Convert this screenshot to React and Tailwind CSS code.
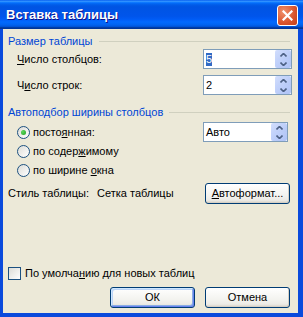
import React from "react";

function Chevron({ up }) {
  return (
    <svg width="7" height="4" viewBox="0 0 7 4">
      <path
        d={up ? "M0.5 3.5 L3.5 0.5 L6.5 3.5" : "M0.5 0.5 L3.5 3.5 L6.5 0.5"}
        stroke="#4D6185"
        strokeWidth="1.6"
        fill="none"
      />
    </svg>
  );
}

function Spinner({ value, selected, width }) {
  return (
    <div className={`flex h-[20px] ${width} border border-[#7F9DB9] bg-white`}>
      <div className="flex flex-1 items-center pl-[2px]">
        {selected ? (
          <span className="bg-[#316AC5] text-white">{value}</span>
        ) : (
          <span>{value}</span>
        )}
      </div>
      <div className="flex w-[16px] flex-col">
        <div className="flex h-[9px] items-center justify-center rounded-t-[2px] bg-[linear-gradient(135deg,#D2DEFD,#B4C7F6)]">
          <Chevron up />
        </div>
        <div className="flex h-[9px] items-center justify-center rounded-b-[2px] bg-[linear-gradient(135deg,#C6D5FC,#AEC2F5)]">
          <Chevron />
        </div>
      </div>
    </div>
  );
}

function Radio({ checked }) {
  return (
    <div className="flex h-[13px] w-[13px] shrink-0 items-center justify-center rounded-full border border-[#1C5180] bg-[linear-gradient(135deg,#DCDCD7,#FFFFFF)]">
      {checked && (
        <div className="h-[5px] w-[5px] rounded-full bg-[radial-gradient(circle_at_35%_35%,#5CD85C,#21A121)]" />
      )}
    </div>
  );
}

function XPButton({ children, width, isDefault }) {
  return (
    <div
      className={`flex h-[21px] ${width} items-center justify-center rounded-[3px] border border-[#003C74] bg-[linear-gradient(180deg,#FFFFFF,#F3F3EF_60%,#ECEBE6_85%,#D6D0C5)] ${
        isDefault
          ? "shadow-[inset_-1px_-1px_#6982EE,inset_1px_1px_#CEE7FF,inset_-2px_-2px_#89ADE4,inset_2px_2px_#BCD4F6]"
          : "shadow-[inset_-1px_-1px_#D6D0C5]"
      }`}
    >
      {children}
    </div>
  );
}

export default function App() {
  return (
    <div className="flex h-[317px] w-[303px] flex-col bg-[#0A4ADC] font-['Liberation_Sans',Arial,sans-serif] text-[11px] leading-[13px] text-black">
      <div className="flex h-[29px] shrink-0 items-center bg-[linear-gradient(180deg,#0058EE_0%,#3593FF_4%,#288EFF_6%,#127DFF_8%,#036FFC_10%,#0262EE_14%,#0057E5_20%,#0054E3_24%,#0055EB_56%,#005BF5_66%,#026AFE_76%,#0062EF_86%,#0052D6_92%,#0040AB_94%,#003092_100%)] pl-[6px] pr-[5px]">
        <span className="flex-1 text-[13px] font-bold leading-[16px] text-white [text-shadow:1px_1px_#0F1089]">
          Вставка таблицы
        </span>
        <div className="mt-[1px] flex h-[21px] w-[21px] items-center justify-center rounded-[3px] border border-white bg-[radial-gradient(circle_at_30%_30%,#F0916C,#D9532C_60%,#C23F19)]">
          <svg width="11" height="11" viewBox="0 0 11 11">
            <path d="M1.5 1.5 L9.5 9.5 M9.5 1.5 L1.5 9.5" stroke="white" strokeWidth="2.2" strokeLinecap="square" />
          </svg>
        </div>
      </div>

      <div className="mb-[4px] ml-[3px] mr-[5px] flex flex-1 flex-col bg-[#ECE9D8] pl-[5px] pt-[6px]">
        <div className="flex h-[13px] w-[282px] items-center">
          <span className="text-[#0046D5]">Размер таблицы</span>
          <div className="ml-[7px] h-px flex-1 bg-[#D0D0BF]" />
        </div>

        <div className="mt-[1px] flex h-[20px] items-center pl-[9px]">
          <span className="w-[186px]">
            <u>Ч</u>исло столбцов:
          </span>
          <Spinner value="5" selected width="w-[89px]" />
        </div>

        <div className="mt-[6px] flex h-[20px] items-center pl-[9px]">
          <span className="w-[186px]">
            Ч<u>и</u>сло строк:
          </span>
          <Spinner value="2" width="w-[89px]" />
        </div>

        <div className="mt-[11px] flex h-[13px] w-[282px] items-center">
          <span className="text-[#0046D5]">Автоподбор ширины столбцов</span>
          <div className="ml-[6px] h-px flex-1 bg-[#D0D0BF]" />
        </div>

        <div className="mt-[3px] flex h-[20px] items-center pl-[9px]">
          <Radio checked />
          <span className="ml-[3px] w-[170px]">
            посто<u>я</u>нная:
          </span>
          <Spinner value="Авто" width="w-[85px]" />
        </div>

        <div className="flex h-[19px] items-center pl-[9px]">
          <Radio />
          <span className="ml-[3px]">
            по содер<u>ж</u>имому
          </span>
        </div>

        <div className="flex h-[19px] items-center pl-[9px]">
          <Radio />
          <span className="ml-[3px]">
            по ширине <u>о</u>кна
          </span>
        </div>

        <div className="mt-[3px] flex h-[21px] items-center">
          <span className="w-[89px]">Стиль таблицы:</span>
          <span className="w-[108px]">Сетка таблицы</span>
          <XPButton width="w-[85px]">
            <span>
              <u>А</u>втоформат...
            </span>
          </XPButton>
        </div>

        <div className="mt-[63px] flex h-[13px] items-center">
          <div className="h-[13px] w-[13px] border border-[#1C5180] bg-[linear-gradient(135deg,#DCDCD7,#FFFFFF)]" />
          <span className="ml-[4px]">
            По умолча<u>н</u>ию для новых таблиц
          </span>
        </div>

        <div className="mt-[7px] flex h-[21px] gap-[10px] pl-[102px]">
          <XPButton width="w-[85px]" isDefault>
            ОК
          </XPButton>
          <XPButton width="w-[85px]">Отмена</XPButton>
        </div>
      </div>
    </div>
  );
}
